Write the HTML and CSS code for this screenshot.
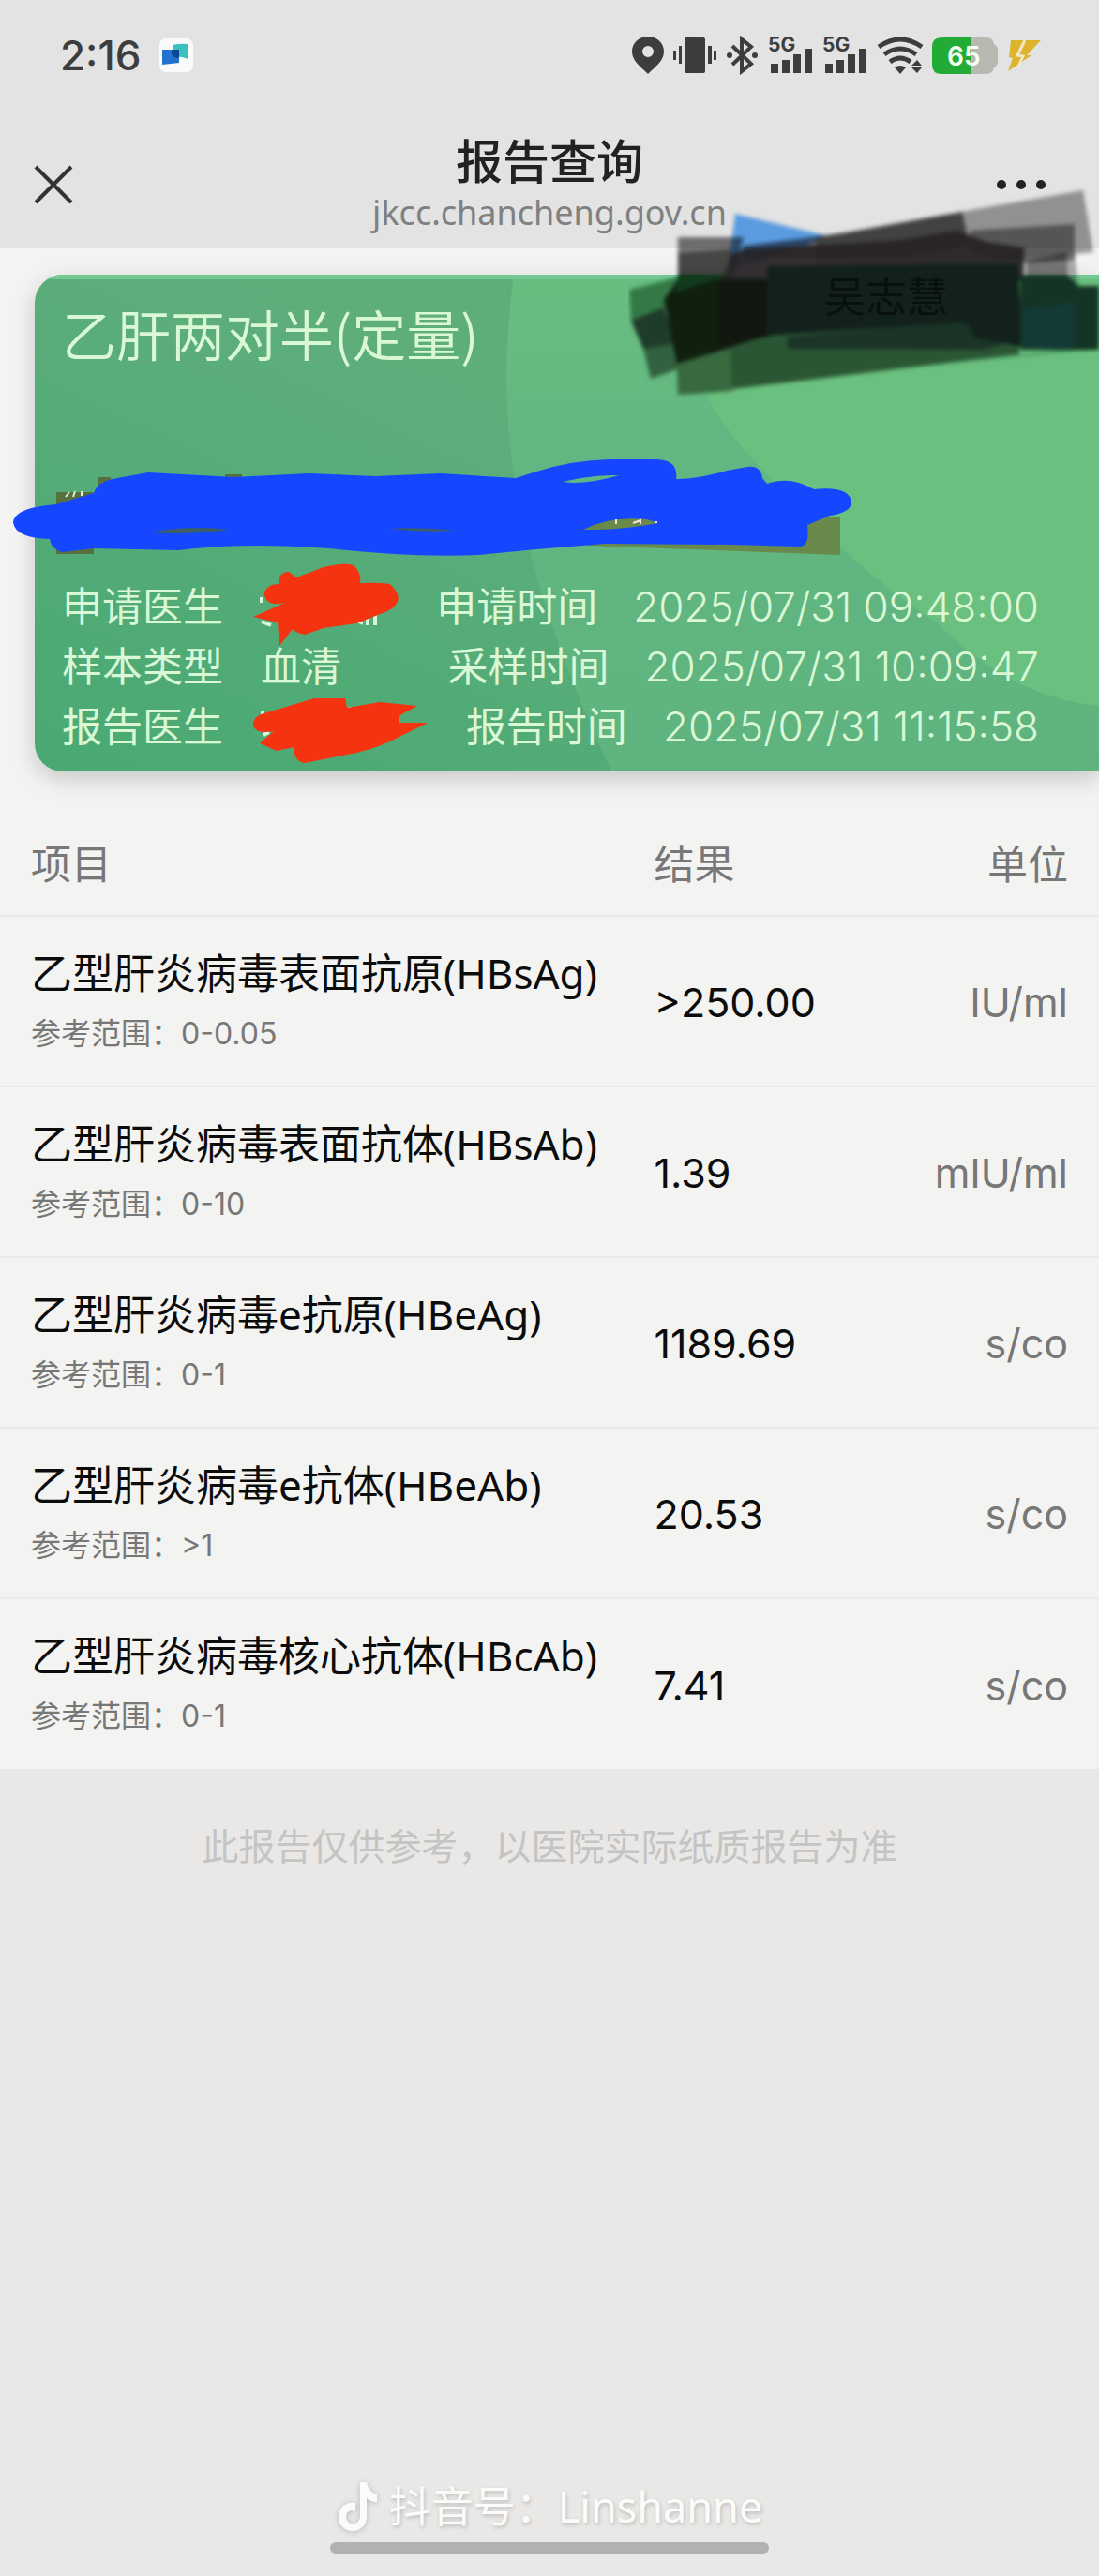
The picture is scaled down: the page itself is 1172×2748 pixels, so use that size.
FILE: index.html
```html
<!DOCTYPE html>
<html lang="zh-CN">

<head>
    <meta charset="UTF-8">
    <title>报告查询</title>
    <meta name="viewport" content="width=device-width, initial-scale=1">
    <link rel="stylesheet" href="styles.css">
</head>

<body>
    <header class="top">
        <div class="status-bar">
            <div class="clock">
                <span>2:16</span>
                <svg class="app-icon" width="36" height="36" viewBox="0 0 36 36">
                    <rect width="36" height="36" rx="7" fill="#fafafa"/>
                    <path d="M14 7q9-2 17-1v16l-7-2-10-1z" fill="#3dbfc0"/>
                    <path d="M3 12h18v14L3 28z" fill="#2372d0"/>
                    <path d="M13 12h8v9q-6 0-8-4z" fill="#08489b"/>
                </svg>
            </div>
            <svg class="status-icons" width="440" height="68" viewBox="672 25 440 68" fill="#3d3d3d">
                <!-- location -->
                <path fill-rule="evenodd" d="M691 39c-10 0-17 7-17 16 0 10 9 16 17 24 8-8 17-14 17-24 0-9-7-16-17-16zm0 10a6 6 0 1 1 0 12 6 6 0 0 1 0-12z"/>
                <!-- vibrate -->
                <rect x="730" y="40" width="22" height="38" rx="2"/>
                <path d="M724 49h3v19h-3zM718 54h3v10h-3zM755 49h4v19h-4zM761 54h3v10h-3z"/>
                <!-- bluetooth -->
                <path d="M781 49l20 19-10 8V42l10 8-20 19" fill="none" stroke="#3d3d3d" stroke-width="4"/>
                <circle cx="778" cy="59" r="3"/>
                <circle cx="805" cy="59" r="3"/>
                <!-- signal -->
                <text x="819" y="55" class="net">5G</text>
                <path d="M822 68h8v10h-8zM834 64h8v14h-8zM846 58h8v20h-8zM858 52h8v26h-8z"/>
                <text x="877" y="55" class="net">5G</text>
                <path d="M880 68h8v10h-8zM892 64h8v14h-8zM904 58h8v20h-8zM916 52h8v26h-8z"/>
                <!-- wifi -->
                <g fill="none" stroke="#3d3d3d" stroke-width="5">
                    <path d="M937 50q23-16 46 0M943 58q17-12 34 0M949 66q11-8 22 0"/>
                </g>
                <path d="M954 72q6-4 12 0l-6 7zM972 70l6-6 5 6zM972 72h11l-5 6z"/>
                <!-- battery -->
                <path d="M1034 40h18q7 0 8 7 4 2 4 6v13q0 4-4 6-1 7-8 7h-18z" fill="#b8b8b2"/>
                <path d="M1036 40h-32q-10 0-10 10v19q0 10 10 10h32z" fill="#22ab35"/>
                <text x="1010" y="70" class="charge">65</text>
                <path d="M1078 43h32l-15 16h5l-25 17 5-14-4-1z" fill="#deb42c"/>
                <path d="M1093 43l-8 16 6 1-5 11" fill="none" stroke="#eee8c8" stroke-width="3"/>
            </svg>
        </div>
        <nav class="nav">
            <button class="nav-button close" aria-label="关闭">
                <svg width="42" height="42" viewBox="0 0 42 42">
                    <path d="M2 2l38 38M40 2L2 40" stroke="#333" stroke-width="4" fill="none"/>
                </svg>
            </button>
            <div class="nav-title">
                <h1>报告查询</h1>
                <p>jkcc.chancheng.gov.cn</p>
            </div>
            <button class="nav-button more" aria-label="更多">
                <svg width="54" height="12" viewBox="0 0 54 12" fill="#222">
                    <circle cx="6" cy="6" r="5"/>
                    <circle cx="27" cy="6" r="5"/>
                    <circle cx="48" cy="6" r="5"/>
                </svg>
            </button>
        </nav>
    </header>

    <main>
        <div class="report">
            <section class="card">
                <svg class="card-bg" viewBox="37 293 1135 530" preserveAspectRatio="none">
                    <defs>
                        <linearGradient id="base" x1="0" y1="1" x2="1" y2="0">
                            <stop offset="0" stop-color="#49a973"/>
                            <stop offset="0.6" stop-color="#5eae7c"/>
                        </linearGradient>
                        <linearGradient id="wave" x1="0" y1="0" x2="0" y2="1">
                            <stop offset="0" stop-color="#68be80"/>
                            <stop offset="0.4" stop-color="#61b682"/>
                            <stop offset="1" stop-color="#5fb37f"/>
                        </linearGradient>
                    </defs>
                    <path d="M37 293h1135v530H37z" fill="url(#base)"/>
                    <path d="M548 293C530 430 535 570 652 823h520V293z" fill="url(#wave)"/>
                    <path d="M700 293Q740 420 794 480 900 600 1000 665 1080 745 1172 753V293z" fill="#6ac07f"/>
                    <path d="M37 293h1135v5H37z" fill="#72c994"/>
                </svg>
                <h2>乙肝两对半(定量)</h2>
                <div class="meta">
                    <div class="meta-row">
                        <span class="label">申请医生</span>
                        <span class="value"></span>
                        <span class="label">申请时间</span>
                        <time>2025/07/31 09:48:00</time>
                    </div>
                    <div class="meta-row">
                        <span class="label">样本类型</span>
                        <span class="value">血清</span>
                        <span class="label">采样时间</span>
                        <time>2025/07/31 10:09:47</time>
                    </div>
                    <div class="meta-row">
                        <span class="label">报告医生</span>
                        <span class="value"></span>
                        <span class="label">报告时间</span>
                        <time>2025/07/31 11:15:58</time>
                    </div>
                </div>
            </section>

            <!-- hand-drawn marks over the card -->
            <svg class="marks" width="920" height="340" viewBox="0 485 920 340">
                <path d="M60 525h40v66H60zM104 509h14v20h-14zM240 506h18v10h-18z" fill="#56703f"/>
                <path d="M70 530l4-5M78 530l2-6M87 529v-5" stroke="#e4ecd4" stroke-width="2"/>
                <path d="M600 552h296v40l-270-10z" fill="#6a8a4b"/>
                <path fill="#1447ff" fill-rule="evenodd" d="M14 557C16 545 34 540 60 538L100 526Q104 513 125 510L158 504 250 509 330 505 400 508 470 505 550 510 572 503Q610 491 650 490H698Q724 490 721 511 745 511 775 502L797 498Q811 496 813 510L818 516Q842 507 868 522 908 518 908 537 906 547 885 550L861 560Q864 584 852 583L780 581 645 580 572 586 510 592Q440 595 350 585 260 578 190 587L100 585 66 589Q54 585 53 575 16 574 14 557zM600 514Q622 518 660 507 635 506 600 514zM622 565Q650 550 690 554L702 558Q660 566 622 565z"/>
                <path d="M160 568q40-8 85-3-45 6-85 3zM415 564q35-2 70 2-35 2-70-2z" fill="#3b5f66"/>
                <path d="M657 554v5M675 558l8-3v4M698 557h3" stroke="#f3dfe0" stroke-width="2" fill="none"/>
                <path d="M279 637v6M279 663l10 4M383 663l4 2M392 658v9M400 655v12M280 758v7M372 756h5M281 784l6-3" stroke="#d9f6d6" stroke-width="4" fill="none"/>
                <path fill="#f63310" d="M270 658L304 643Q293 646 286 642 278 634 285 627 290 623 297 623 297 610 308 610L316 616 345 605Q372 599 378 604 386 612 384 622 413 621 417 624 427 634 424 642 420 650 408 654L380 665 345 670 325 677Q315 675 312 671L298 689 296 664z"/>
                <path fill="#f63310" d="M270 773Q270 763 285 760L335 745H368L370 755 405 749 445 753 425 764V771H456L418 790Q395 801 365 806L325 814Q312 812 314 797L295 801 277 793 292 780Q272 784 270 773z"/>
            </svg>

            <table class="results">
                <thead>
                    <tr>
                        <th>项目</th>
                        <th>结果</th>
                        <th>单位</th>
                    </tr>
                </thead>
                <tbody>
                    <tr>
                        <td>
                            <div class="name">乙型肝炎病毒表面抗原(HBsAg)</div>
                            <div class="range">参考范围：<span>0-0.05</span></div>
                        </td>
                        <td>&gt;250.00</td>
                        <td>IU/ml</td>
                    </tr>
                    <tr>
                        <td>
                            <div class="name">乙型肝炎病毒表面抗体(HBsAb)</div>
                            <div class="range">参考范围：<span>0-10</span></div>
                        </td>
                        <td>1.39</td>
                        <td>mIU/ml</td>
                    </tr>
                    <tr>
                        <td>
                            <div class="name">乙型肝炎病毒e抗原(HBeAg)</div>
                            <div class="range">参考范围：<span>0-1</span></div>
                        </td>
                        <td>1189.69</td>
                        <td>s/co</td>
                    </tr>
                    <tr>
                        <td>
                            <div class="name">乙型肝炎病毒e抗体(HBeAb)</div>
                            <div class="range">参考范围：<span>&gt;1</span></div>
                        </td>
                        <td>20.53</td>
                        <td>s/co</td>
                    </tr>
                    <tr>
                        <td>
                            <div class="name">乙型肝炎病毒核心抗体(HBcAb)</div>
                            <div class="range">参考范围：<span>0-1</span></div>
                        </td>
                        <td>7.41</td>
                        <td>s/co</td>
                    </tr>
                </tbody>
            </table>
        </div>
        <p class="notice">此报告仅供参考，以医院实际纸质报告为准</p>
    </main>

    <footer class="bottom">
        <div class="account">
            <svg width="44" height="56" viewBox="0 0 44 56">
                <path d="M25 2h7q2 11 11 13v8q-6 0-11-4v19c0 10-7 16-15 16S2 48 2 39c0-10 8-17 18-15v9c-6-2-10 1-10 6 0 4 3 7 7 7 5 0 8-3 8-8z" fill="#fbfbf9"/>
            </svg>
            <span>抖音号：Linshanne</span>
        </div>
        <div class="home-bar"></div>
    </footer>

    <!-- translucent strokes across the top right corner -->
    <svg class="shade" width="502" height="240" viewBox="670 195 502 240">
        <g class="strokes">
            <path d="M784 228L880 251 860 262 776 290z" fill="#5b9be0"/>
            <g fill="#000">
                <path d="M870 253L1155 203 1166 269 870 300z" fill-opacity="0.36"/>
                <path d="M900 249L1026 226 1034 262 960 275 790 275 793 262z" fill-opacity="0.55"/>
                <path d="M1034 246L1146 239V277L1092 281 1034 270z" fill-opacity="0.42"/>
                <path d="M1094 278L1138 270V310L1094 320z" fill-opacity="0.52"/>
                <path d="M1138 275L1146 270 1150 308H1138z" fill-opacity="0.3"/>
                <path d="M723 253H793L781 300H723z" fill-opacity="0.52"/>
                <path d="M723 270L780 266 776 300H723z" fill-opacity="0.4"/>
            </g>
            <path d="M780 272L793 266 960 256 1020 246 1052 258 1092 264V300H770z" fill="#272325" fill-opacity="0.94"/>
            <path d="M671 309L723 296V325L673 342z" fill="#347847"/>
            <path d="M673 342L708 328 722 370 686 372z" fill="#1f3b29"/>
            <path d="M686 372L722 366V394L694 404z" fill="#32613f"/>
            <path d="M721 370L781 368V417L723 421z" fill="#38693f"/>
            <path d="M778 362L930 345 1087 362V378L781 415z" fill="#2b5634"/>
            <path d="M781 415L1130 373H1172L1000 388z" fill="#418d53" fill-opacity="0.7"/>
            <path d="M840 360L1087 332V362L1050 373 840 372z" fill="#1b3427"/>
            <path d="M708 320L723 298H815V358L778 371 722 388z" fill="#10200f"/>
            <path d="M767 298H822V358L767 371z" fill="#11170f"/>
            <path d="M723 293H778L720 312z" fill="#123b1d"/>
            <path d="M818 284L1086 281 1090 370 1040 360 1030 344 930 350 818 358z" fill="#12211c"/>
            <path d="M1088 294H1138L1150 305H1172V373H1088z" fill="#143425"/>
            <path d="M1090 330L1145 322V371H1090z" fill="#133a36"/>
        </g>
        <text x="879" y="333" class="patient">吴志慧</text>
    </svg>
</body>

</html>
```
FILE: styles.css
```css
:root {
    --top-bg: #e3e3e3;
    --report-bg: #f3f3f2;
    --body-bg: #e9e8e7;
    --line-color: #eaeaea;
    --text-color: #0c0c0c;
    --muted-color: #777777;
    --card-text: #daf8d6;
}

* {
    box-sizing: border-box;
}

body {
    position: relative;
    display: flex;
    flex-direction: column;
    min-height: 100vh;
    margin: 0;
    overflow-x: hidden;
    background-color: var(--body-bg);
    color: var(--text-color);
    font-family: "Noto Sans", "Noto Sans CJK SC", sans-serif;
}

h1, h2, p {
    margin: 0;
    font-weight: 400;
}

.top {
    padding-bottom: 13px;
    background-color: var(--top-bg);
}

.status-bar {
    display: flex;
    justify-content: space-between;
    align-items: center;
    height: 118px;
    padding: 0 60px 0 64px;
}

.clock {
    display: flex;
    align-items: center;
    gap: 20px;
    color: #3d3d3d;
    font-family: Inter, sans-serif;
    font-size: 44px;
    font-weight: 500;
}

.net {
    font: 700 21px Inter, sans-serif;
}

.charge {
    font: 600 28px Inter, sans-serif;
    fill: #f4fff4;
}

.nav {
    display: grid;
    grid-template-columns: 1fr auto 1fr;
    align-items: center;
    padding: 24px 36px 0;
}

.nav-title {
    text-align: center;
}

.nav-title h1 {
    color: #222;
    font-size: 50px;
    font-weight: 500;
    line-height: 60px;
}

.nav-title p {
    color: #808080;
    font-size: 36px;
    line-height: 50px;
}

.nav-button {
    display: flex;
    padding: 0;
    border: none;
    background: none;
    cursor: pointer;
}

.more {
    justify-self: end;
    margin-right: 20px;
}

.report {
    position: relative;
    padding-top: 28px;
    background-color: var(--report-bg);
}

.card {
    position: relative;
    margin-left: 37px;
    padding: 20px 64px 16px 29px;
    overflow: hidden;
    border-radius: 30px 0 0 30px;
    box-shadow: 0 8px 24px rgba(0, 0, 0, 0.18);
    color: var(--card-text);
}

.card-bg {
    position: absolute;
    inset: 0;
    width: 100%;
    height: 100%;
}

.card h2 {
    position: relative;
    font-family: "Noto Sans CJK SC", sans-serif;
    font-size: 58px;
    font-weight: 350;
    line-height: 84px;
}

.meta {
    position: relative;
    margin-top: 218px;
    font-size: 43px;
    line-height: 64px;
}

.meta-row {
    display: flex;
}

.meta-row .value {
    flex: 1;
    margin-left: 40px;
}

.meta-row time {
    margin-left: 38px;
    font-family: Inter, sans-serif;
    font-size: 44px;
    font-weight: 300;
}

.marks {
    position: absolute;
    top: 220px;
    left: 0;
}

.results {
    width: 100%;
    margin-top: 44px;
    border-collapse: collapse;
    table-layout: fixed;
}

.results th {
    height: 110px;
    padding: 0 0 4px;
    color: var(--muted-color);
    font-size: 43px;
    font-weight: 400;
    text-align: left;
}

.results td {
    height: 182px;
    padding: 2px 0 0;
    border-top: 2px solid var(--line-color);
    font-family: Inter, sans-serif;
    font-size: 43px;
}

.results th:first-child,
.results td:first-child {
    width: 59%;
    padding-left: 33px;
    font-family: inherit;
}

.results th:nth-child(2),
.results td:nth-child(2) {
    width: 18%;
    padding-left: 6px;
}

.results th:last-child,
.results td:last-child {
    padding-right: 33px;
    color: var(--muted-color);
    text-align: right;
}

.name {
    font-size: 44px;
    line-height: 66px;
    white-space: nowrap;
}

.range {
    color: var(--muted-color);
    font-size: 32px;
    line-height: 62px;
}

.range span {
    font-family: Inter, sans-serif;
}

.notice {
    padding-top: 54px;
    color: #c4c4c3;
    font-size: 39px;
    line-height: 56px;
    text-align: center;
}

.bottom {
    display: flex;
    flex-direction: column;
    align-items: center;
    gap: 8px;
    margin-top: auto;
    padding-bottom: 24px;
}

.account {
    display: flex;
    align-items: center;
    gap: 12px;
    color: #fbfbf9;
    font-size: 45px;
    line-height: 60px;
    text-shadow: 1px 2px 4px rgba(0, 0, 0, 0.2);
}

.account svg {
    filter: drop-shadow(0 1px 3px rgba(0, 0, 0, 0.2));
}

.home-bar {
    width: 40%;
    height: 12px;
    border-radius: 6px;
    background-color: #b1b1af;
}

.shade {
    position: absolute;
    top: 195px;
    right: 0;
}

.strokes {
    filter: blur(2px);
}

.patient {
    font-family: "Noto Sans CJK SC", sans-serif;
    font-size: 44px;
    fill: #08110d;
}
```
